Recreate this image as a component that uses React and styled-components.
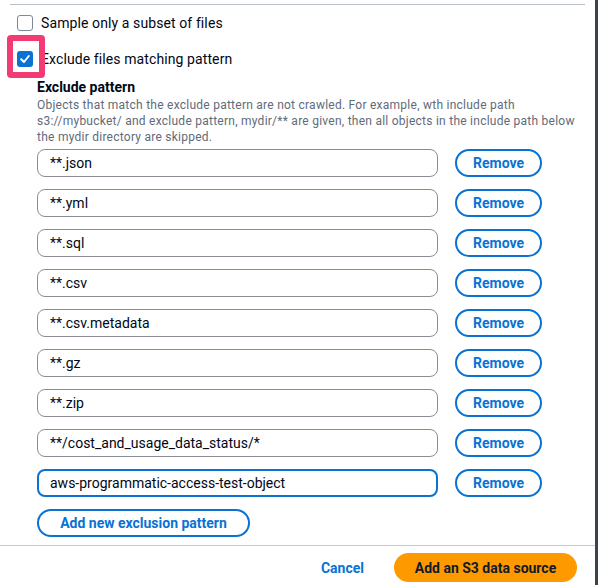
import React from 'react';
import styled, { createGlobalStyle } from 'styled-components';

const GlobalStyle = createGlobalStyle`
  html, body {
    margin: 0;
    padding: 0;
    background: #ffffff;
  }
  body {
    font-family: Roboto, "Noto Sans", "Liberation Sans", sans-serif;
    color: #000716;
  }
`;

const Frame = styled.div`
  position: relative;
  width: 598px;
  height: 585px;
  box-sizing: border-box;
  border-right: 3px solid #3d434c;
  display: flex;
  flex-direction: column;
  overflow: hidden;
`;

const TopRule = styled.div`
  margin: 4px 10px 0 10px;
  height: 1px;
  background: #b6bec9;
`;

const Body = styled.div`
  flex: 1;
  padding: 9px 0 0 17px;
`;

const CheckRow = styled.label`
  display: flex;
  align-items: center;
  gap: 8px;
  height: 18px;
  margin-bottom: ${p => p.$gap || 0}px;
  font-size: 14px;
  letter-spacing: 0.1px;
  color: #000716;
  white-space: nowrap;
`;

const Box = styled.span`
  width: 16px;
  height: 16px;
  box-sizing: border-box;
  border-radius: 3px;
  border: ${p => (p.$checked ? 'none' : '1.5px solid #7d8998')};
  background: ${p => (p.$checked ? '#0972d3' : '#ffffff')};
  display: flex;
  align-items: center;
  justify-content: center;
  flex-shrink: 0;
`;

const Highlight = styled.div`
  position: absolute;
  left: 7px;
  top: 35px;
  width: 38px;
  height: 43px;
  box-sizing: border-box;
  border: 6px solid #f23a73;
  border-radius: 4px;
  pointer-events: none;
`;

const Field = styled.div`
  padding: 9px 0 0 20px;
`;

const FieldLabel = styled.div`
  font-size: 14px;
  font-weight: 700;
  line-height: 20px;
  color: #000716;
`;

const Description = styled.div`
  font-size: 12px;
  line-height: 16px;
  letter-spacing: 0.25px;
  color: #5f6b7a;
  white-space: nowrap;
  margin-bottom: 4px;
`;

const List = styled.div`
  display: flex;
  flex-direction: column;
  gap: 12px;
`;

const Row = styled.div`
  display: flex;
  align-items: center;
  gap: 17px;
`;

const Input = styled.div`
  width: 401px;
  height: 28px;
  box-sizing: border-box;
  border-radius: 8px;
  border: ${p => (p.$focused ? '2px solid #0972d3' : '1px solid #8c8c94')};
  padding: 0 ${p => (p.$focused ? 11 : 12)}px;
  display: flex;
  align-items: center;
  font-size: 14px;
  color: #000716;
  white-space: nowrap;
`;

const PillButton = styled.button`
  height: 28px;
  padding: 0;
  box-sizing: border-box;
  border: 2px solid #0972d3;
  border-radius: 20px;
  background: #ffffff;
  color: #0972d3;
  font-family: inherit;
  font-size: 14px;
  font-weight: 700;
  white-space: nowrap;
  width: ${p => p.$width}px;
`;

const AddRow = styled.div`
  margin-top: 12px;
`;

const BottomRule = styled.div`
  height: 1px;
  background: #c6c6cd;
`;

const Footer = styled.div`
  height: 39px;
  box-sizing: border-box;
  padding: 4px 18px 0 0;
  display: flex;
  align-items: center;
  justify-content: flex-end;
  gap: 30px;
`;

const LinkButton = styled.button`
  border: none;
  background: none;
  padding: 0;
  color: #0972d3;
  font-family: inherit;
  font-size: 14px;
  font-weight: 700;
`;

const PrimaryButton = styled.button`
  height: 29px;
  width: 183px;
  border: none;
  border-radius: 16px;
  background: #ff9900;
  color: #0f1b2a;
  font-family: inherit;
  font-size: 14px;
  font-weight: 700;
  white-space: nowrap;
`;

const patterns = [
  '**.json',
  '**.yml',
  '**.sql',
  '**.csv',
  '**.csv.metadata',
  '**.gz',
  '**.zip',
  '**/cost_and_usage_data_status/*',
  'aws-programmatic-access-test-object',
];

const Check = () => (
  <svg width="12" height="12" viewBox="0 0 12 12">
    <path d="M2.2 6.2 L5 9 L9.8 3" fill="none" stroke="#ffffff" strokeWidth="2" strokeLinecap="round" strokeLinejoin="round" />
  </svg>
);

export default function App() {
  return (
    <Frame>
      <GlobalStyle />
      <TopRule />
      <Body>
        <CheckRow $gap={18}>
          <Box />
          Sample only a subset of files
        </CheckRow>
        <CheckRow>
          <Box $checked>
            <Check />
          </Box>
          Exclude files matching pattern
        </CheckRow>
        <Field>
          <FieldLabel>Exclude pattern</FieldLabel>
          <Description>
            Objects that match the exclude pattern are not crawled. For example, wth include path
            <br />
            s3://mybucket/ and exclude pattern, mydir/** are given, then all objects in the include path below
            <br />
            the mydir directory are skipped.
          </Description>
          <List>
            {patterns.map((p, i) => (
              <Row key={p}>
                <Input $focused={i === patterns.length - 1}>{p}</Input>
                <PillButton $width={87}>Remove</PillButton>
              </Row>
            ))}
          </List>
          <AddRow>
            <PillButton $width={213}>Add new exclusion pattern</PillButton>
          </AddRow>
        </Field>
      </Body>
      <BottomRule />
      <Footer>
        <LinkButton>Cancel</LinkButton>
        <PrimaryButton>Add an S3 data source</PrimaryButton>
      </Footer>
      <Highlight />
    </Frame>
  );
}
